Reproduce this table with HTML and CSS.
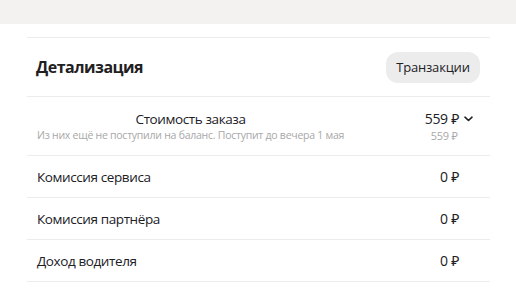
FILE: index.html
```html
<!DOCTYPE html>
<html lang="ru">
<head>
<meta charset="utf-8">
<link rel="stylesheet" href="styles.css">
</head>
<body>
<div class="topbar"></div>
<section class="card">
  <header class="head">
    <h2 class="title">Детализация</h2>
    <button class="btn">Транзакции</button>
  </header>
  <div class="row row-main">
    <div class="left">
      <div class="name center">Стоимость заказа</div>
      <div class="sub">Из них ещё не поступили на баланс. Поступит до вечера 1 мая</div>
    </div>
    <div class="right">
      <div class="val">559 ₽ <svg class="chev" width="9" height="6" viewBox="0 0 9 6"><path d="M1 1.2 L4.5 4.5 L8 1.2" fill="none" stroke="#222" stroke-width="1.6" stroke-linecap="round" stroke-linejoin="round"/></svg></div>
      <div class="subval">559 ₽</div>
    </div>
  </div>
  <div class="row">
    <div class="name">Комиссия сервиса</div>
    <div class="val">0 ₽</div>
  </div>
  <div class="row">
    <div class="name">Комиссия партнёра</div>
    <div class="val">0 ₽</div>
  </div>
  <div class="row">
    <div class="name">Доход водителя</div>
    <div class="val">0 ₽</div>
  </div>
</section>
</body>
</html>
```
FILE: styles.css
```css
html, body {
  margin: 0;
  padding: 0;
  background: #ffffff;
  font-family: "Open Sans", "Noto Sans", sans-serif;
  color: #21201f;
}
.topbar {
  height: 24px;
  background: #f3f2f0;
}
.card {
  margin: 13px 26px 0 27px;
  border-top: 1px solid #ececec;
}
.head {
  height: 58px;
  display: flex;
  align-items: center;
  justify-content: space-between;
  padding: 0 10px 0 9px;
  border-bottom: 1px solid #ececec;
}
.title {
  margin: 0;
  font-size: 16px;
  font-weight: 700;
  letter-spacing: -0.5px;
}
.btn {
  height: 31px;
  width: 94px;
  padding: 0;
  border: none;
  border-radius: 12px;
  background: #ececec;
  font-family: inherit;
  font-size: 13px;
  letter-spacing: -0.2px;
  color: #21201f;
}
.row {
  display: flex;
  align-items: center;
  justify-content: space-between;
  height: 41px;
  padding: 0 31px 0 10px;
  border-bottom: 1px solid #ececec;
}
.name {
  font-size: 13.5px;
  letter-spacing: -0.4px;
}
.row-main {
  height: 58px;
  padding-right: 17px;
}
.left {
  display: flex;
  flex-direction: column;
  align-items: center;
}
.name.center {
  line-height: 18px;
}
.sub {
  font-size: 10.5px;
  letter-spacing: -0.25px;
  color: #a8a8a8;
  line-height: 15px;
}
.right {
  display: flex;
  flex-direction: column;
  align-items: flex-start;
}
.val {
  display: flex;
  align-items: center;
  gap: 4px;
  font-size: 14px;
  letter-spacing: -0.3px;
  line-height: 18px;
}
.chev {
  margin-left: 1px;
}
.subval {
  font-size: 11px;
  letter-spacing: -0.2px;
  color: #a8a8a8;
  line-height: 15px;
  padding-left: 6px;
}
```
